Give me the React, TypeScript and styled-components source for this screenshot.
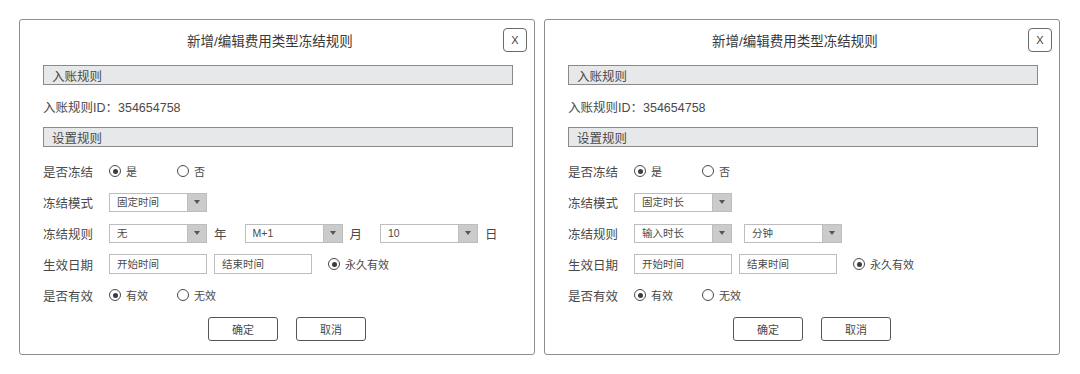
import React from "react";
import styled, { createGlobalStyle } from "styled-components";

const GlobalStyle = createGlobalStyle`
  html, body { margin: 0; padding: 0; background: #ffffff; }
  body {
    font-family: "Liberation Sans", "Noto Sans CJK SC", "Noto Sans", sans-serif;
    color: #484848;
  }
  * { box-sizing: border-box; }
`;

const Page = styled.div`
  display: flex;
  gap: 9px;
  padding: 19px 0 0 19px;
  width: 1080px;
  height: 374px;
`;

const Dialog = styled.div`
  width: 516px;
  height: 336px;
  border: 1px solid #8e8e8e;
  border-radius: 3px;
  padding: 8px 21px 0 23px;
  display: flex;
  flex-direction: column;
  background: #fff;
`;

const Header = styled.div`
  display: flex;
  align-items: flex-start;
  margin-right: -14px;
  height: 25px;
`;

const Title = styled.div`
  flex: 1;
  text-align: center;
  padding: 5px 6px 0 0;
  font-size: 13.5px;
  line-height: 18px;
  color: #383838;
`;

const CloseButton = styled.div`
  width: 24px;
  height: 24px;
  border: 1px solid #6a6a6a;
  border-radius: 4px;
  display: flex;
  align-items: center;
  justify-content: center;
  font-size: 11px;
  color: #444;
`;

const SectionBar = styled.div<{ $top: number }>`
  margin-top: ${(p) => p.$top}px;
  height: 20px;
  border: 1.5px solid #8a8a8a;
  background: #e7e8e9;
  padding-left: 8px;
  display: flex;
  align-items: center;
  font-size: 12.5px;
  color: #4a4a4a;
`;

const InfoLine = styled.div`
  margin-top: 14px;
  line-height: 18px;
  font-size: 12.5px;
  color: #4a4a4a;
`;

const Form = styled.div`
  margin-top: 14px;
  display: flex;
  flex-direction: column;
  gap: 11px;
`;

const Row = styled.div`
  display: flex;
  align-items: center;
  height: 20px;
`;

const Label = styled.div`
  width: 66px;
  font-size: 12.5px;
  color: #4a4a4a;
  flex-shrink: 0;
`;

const RadioOption = styled.div<{ $width?: number }>`
  display: flex;
  align-items: center;
  gap: 5px;
  width: ${(p) => (p.$width ? `${p.$width}px` : "auto")};
  font-size: 11px;
  color: #4a4a4a;
`;

const RadioCircle = styled.span<{ $checked: boolean }>`
  width: 12px;
  height: 12px;
  border-radius: 50%;
  border: 1.5px solid #4a4a4a;
  display: inline-flex;
  align-items: center;
  justify-content: center;
  &::after {
    content: "";
    width: 5px;
    height: 5px;
    border-radius: 50%;
    background: ${(p) => (p.$checked ? "#3c3c3c" : "transparent")};
  }
`;

const SelectBox = styled.div`
  width: 98px;
  height: 19px;
  border: 1px solid #bdbdbd;
  display: flex;
  background: #fff;
`;

const SelectText = styled.div`
  flex: 1;
  padding-left: 7px;
  font-size: 10.5px;
  line-height: 17px;
  color: #4a4a4a;
`;

const SelectArrow = styled.div`
  width: 19px;
  background: #cbcbcb;
  border-left: 1px solid #bdbdbd;
  display: flex;
  align-items: center;
  justify-content: center;
  &::after {
    content: "";
    border-left: 3px solid transparent;
    border-right: 3px solid transparent;
    border-top: 4px solid #555;
  }
`;

const Group = styled.div<{ $gap: number }>`
  display: flex;
  align-items: center;
  gap: ${(p) => p.$gap}px;
`;

const Unit = styled.span`
  margin: 0 6px 0 7px;
  font-size: 12.5px;
  color: #4a4a4a;
`;

const TextInput = styled.div`
  width: 98px;
  height: 20px;
  border: 1px solid #bdbdbd;
  padding-left: 7px;
  font-size: 10.5px;
  line-height: 18px;
  color: #4a4a4a;
`;

const ForeverOption = styled(RadioOption)`
  margin-left: 9px;
`;

const Buttons = styled.div`
  margin-top: 12px;
  display: flex;
  justify-content: center;
  gap: 18px;
  padding-left: 18px;
`;

const Button = styled.div`
  width: 70px;
  height: 24px;
  border: 1px solid #555;
  border-radius: 3px;
  display: flex;
  align-items: center;
  justify-content: center;
  font-size: 11px;
  color: #4a4a4a;
`;

type RuleItem = { value: string; unit?: string };

const Select: React.FC<{ value: string }> = ({ value }) => (
  <SelectBox>
    <SelectText>{value}</SelectText>
    <SelectArrow />
  </SelectBox>
);

const Radio: React.FC<{ checked: boolean; label: string; width?: number }> = ({
  checked,
  label,
  width,
}) => (
  <RadioOption $width={width}>
    <RadioCircle $checked={checked} />
    {label}
  </RadioOption>
);

const RuleDialog: React.FC<{ mode: string; rules: RuleItem[] }> = ({ mode, rules }) => (
  <Dialog>
    <Header>
      <Title>新增/编辑费用类型冻结规则</Title>
      <CloseButton>X</CloseButton>
    </Header>
    <SectionBar $top={12}>入账规则</SectionBar>
    <InfoLine>入账规则ID：354654758</InfoLine>
    <SectionBar $top={10}>设置规则</SectionBar>
    <Form>
      <Row>
        <Label>是否冻结</Label>
        <Radio checked label="是" width={68} />
        <Radio checked={false} label="否" />
      </Row>
      <Row>
        <Label>冻结模式</Label>
        <Select value={mode} />
      </Row>
      <Row>
        <Label>冻结规则</Label>
        <Group $gap={12}>
          {rules.map((r, i) => (
            <Group $gap={0} key={i}>
              <Select value={r.value} />
              {r.unit && <Unit>{r.unit}</Unit>}
            </Group>
          ))}
        </Group>
      </Row>
      <Row>
        <Label>生效日期</Label>
        <Group $gap={7}>
          <TextInput>开始时间</TextInput>
          <TextInput>结束时间</TextInput>
          <ForeverOption>
            <RadioCircle $checked />
            永久有效
          </ForeverOption>
        </Group>
      </Row>
      <Row>
        <Label>是否有效</Label>
        <Radio checked label="有效" width={68} />
        <Radio checked={false} label="无效" />
      </Row>
    </Form>
    <Buttons>
      <Button>确定</Button>
      <Button>取消</Button>
    </Buttons>
  </Dialog>
);

export default function App() {
  return (
    <>
      <GlobalStyle />
      <Page>
        <RuleDialog
          mode="固定时间"
          rules={[
            { value: "无", unit: "年" },
            { value: "M+1", unit: "月" },
            { value: "10", unit: "日" },
          ]}
        />
        <RuleDialog
          mode="固定时长"
          rules={[{ value: "输入时长" }, { value: "分钟" }]}
        />
      </Page>
    </>
  );
}
